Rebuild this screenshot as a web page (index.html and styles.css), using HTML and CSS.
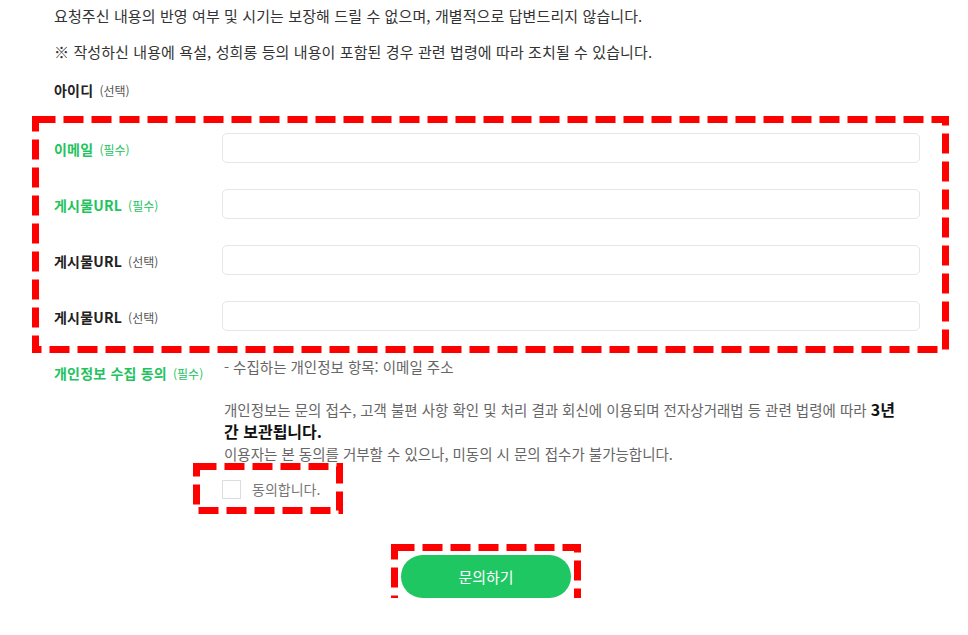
FILE: index.html
```html
<!DOCTYPE html>
<html lang="ko">
<head>
  <meta charset="UTF-8">
  <meta name="viewport" content="width=device-width, initial-scale=1.0">
  <title>문의하기</title>
  <link rel="stylesheet" href="styles.css">
</head>
<body>
  <div class="page">
    <!-- Notices -->
    <p class="notice">요청주신 내용의 반영 여부 및 시기는 보장해 드릴 수 없으며, 개별적으로 답변드리지 않습니다.</p>
    <p class="notice">※ 작성하신 내용에 욕설, 성희롱 등의 내용이 포함된 경우 관련 법령에 따라 조치될 수 있습니다.</p>

    <div class="field-label id-label">아이디 <span class="tag">(선택)</span></div>

    <!-- Input rows -->
    <div class="rows">
      <div class="row">
        <label class="field-label required" for="email">이메일 <span class="tag">(필수)</span></label>
        <input type="text" id="email" class="text-input">
      </div>
      <div class="row">
        <label class="field-label required" for="url1">게시물URL <span class="tag">(필수)</span></label>
        <input type="text" id="url1" class="text-input">
      </div>
      <div class="row">
        <label class="field-label" for="url2">게시물URL <span class="tag">(선택)</span></label>
        <input type="text" id="url2" class="text-input">
      </div>
      <div class="row">
        <label class="field-label" for="url3">게시물URL <span class="tag">(선택)</span></label>
        <input type="text" id="url3" class="text-input">
      </div>
      <svg class="mark mark-rows" width="917" height="237" viewBox="0 0 917 237">
        <rect x="3.5" y="3.5" width="910" height="230" fill="none" stroke="#ff0000" stroke-width="7" stroke-dasharray="20 8"/>
      </svg>
    </div>

    <!-- Privacy agreement -->
    <div class="agree">
      <div class="field-label required agree-label">개인정보 수집 동의 <span class="tag">(필수)</span></div>
      <div class="agree-body">
        <p class="agree-item">- 수집하는 개인정보 항목: 이메일 주소</p>
        <p class="agree-text">개인정보는 문의 접수, 고객 불편 사항 확인 및 처리 결과 회신에 이용되며 전자상거래법 등 관련 법령에 따라 <strong>3년 간 보관됩니다.</strong></p>
        <p class="agree-text">이용자는 본 동의를 거부할 수 있으나, 미동의 시 문의 접수가 불가능합니다.</p>
        <label class="check">
          <input type="checkbox" class="check-box">
          <span>동의합니다.</span>
          <svg class="mark mark-check" width="150" height="51" viewBox="0 0 150 51">
            <rect x="3.5" y="3.5" width="143" height="44" fill="none" stroke="#ff0000" stroke-width="7" stroke-dasharray="20 8"/>
          </svg>
        </label>
      </div>
    </div>

    <div class="actions">
      <div class="submit-wrap">
        <button class="submit">문의하기</button>
        <svg class="mark mark-submit" width="190" height="68" viewBox="0 0 190 68">
          <rect x="3.5" y="3.5" width="183" height="61" fill="none" stroke="#ff0000" stroke-width="7" stroke-dasharray="20 8"/>
        </svg>
      </div>
    </div>
  </div>
</body>
</html>
```

FILE: styles.css
```css
/* Basic Reset */
body, p, div, input, button, label {
  margin: 0;
  padding: 0;
  box-sizing: border-box;
}

body {
  font-family: "Noto Sans CJK KR", "Noto Sans", sans-serif;
  background-color: #fff;
  color: #333;
}

.page {
  padding: 5px 48px 0 54px;
}

/* Top notices */
.notice {
  font-size: 15px;
  letter-spacing: 0.1px;
  line-height: 22px;
  margin-bottom: 14px;
}

/* Labels */
.field-label {
  font-size: 14px;
  font-weight: bold;
  letter-spacing: 0.2px;
  color: #222;
}

.field-label .tag {
  font-size: 12px;
  font-weight: normal;
  letter-spacing: 0;
  color: #555;
  margin-left: 2px;
}

.field-label.required,
.field-label.required .tag {
  color: #22c35e;
}

.id-label {
  margin-top: 17px;
  line-height: 20px;
}

/* Input rows with the annotation box */
.rows {
  position: relative;
  margin-top: 19px;
}

.row {
  display: flex;
  align-items: center;
  height: 56px;
}

.row .field-label {
  width: 168px;
  flex-shrink: 0;
  padding-top: 2px;
}

.text-input {
  flex: 1;
  height: 30px;
  border: 1px solid #e6e6e6;
  border-radius: 5px;
  padding: 0 10px;
  font-size: 13px;
}

.mark {
  position: absolute;
  pointer-events: none;
}

.mark-rows {
  left: -22px;
  top: -4px;
}

/* Privacy agreement */
.agree {
  display: flex;
  margin-top: 12px;
}

.agree-label {
  width: 168px;
  flex-shrink: 0;
  padding-top: 7px;
}

.agree-body {
  flex: 1;
  color: #666;
  font-size: 14.5px;
}

.agree-item {
  line-height: 22px;
  margin-left: 2px;
}

.agree-text {
  max-width: 690px;
  line-height: 22px;
  margin-left: 2px;
  word-break: keep-all;
}

.agree-item + .agree-text {
  margin-top: 21px;
}

.agree-text strong {
  font-size: 16px;
  line-height: 20px;
  color: #111;
}

.check {
  position: relative;
  display: inline-flex;
  align-items: center;
  gap: 11px;
  margin-top: 14px;
  color: #777;
  font-size: 14px;
}

.check-box {
  appearance: none;
  width: 19px;
  height: 19px;
  border: 1px solid #ddd;
  background: #fff;
}

.mark-check {
  left: -29px;
  top: -16px;
}

/* Submit */
.actions {
  display: flex;
  justify-content: center;
  padding-right: 2px;
  margin-top: 52px;
}

.submit-wrap {
  position: relative;
}

.submit {
  width: 170px;
  height: 43px;
  border: none;
  border-radius: 22px;
  background-color: #1fc763;
  color: #fff;
  font-family: inherit;
  font-size: 15px;
}

.mark-submit {
  left: -10px;
  top: -11px;
}
```
